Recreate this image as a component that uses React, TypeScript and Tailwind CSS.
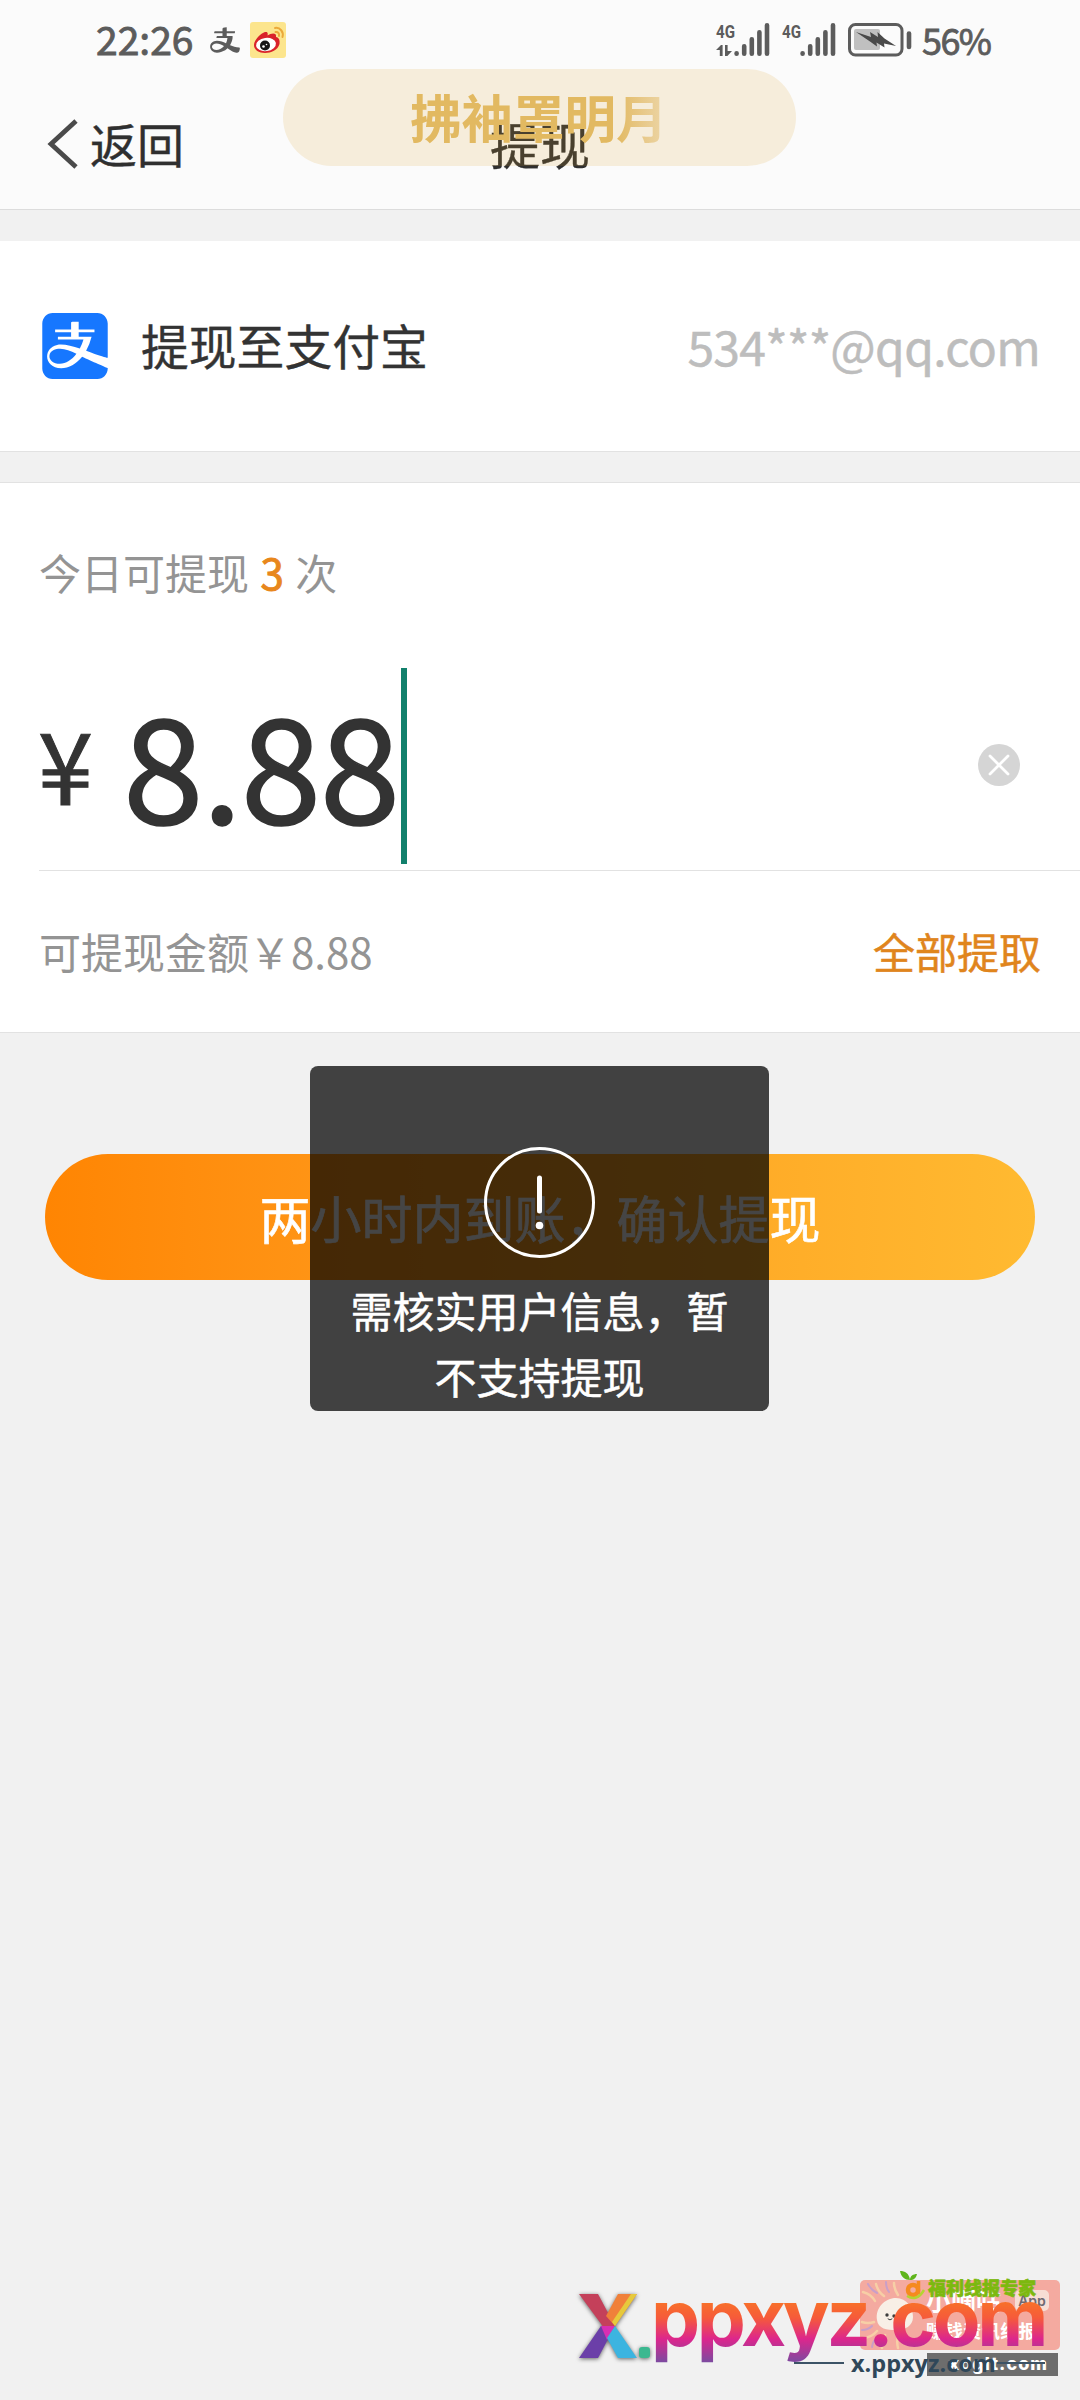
import { AiOutlineAlipay } from 'react-icons/ai';
import { SiAlipay } from 'react-icons/si';

function Signal({ data }: { data?: boolean }) {
  return (
    <svg width="54" height="34" viewBox="0 0 54 34" className="overflow-visible text-[#5c5c5c]">
      <text
        x="0"
        y="15"
        fontSize="19"
        fontWeight="700"
        fill="currentColor"
        textLength="19"
        lengthAdjust="spacingAndGlyphs"
        fontFamily="Roboto, sans-serif"
      >
        4G
      </text>
      {data && (
        <path d="M0 27l5-5h1.6v11H3.8v-6zM9 22h2.6v6H16l-4.6 5H9z" fill="currentColor" />
      )}
      <g stroke="currentColor" strokeWidth="4.6" strokeLinecap="round">
        <path d="M20.6 30.2v.6M28.2 23.2v7.6M35.8 16.2v14.6M43.4 9.2v21.6M51 2.2v28.6" />
      </g>
    </svg>
  );
}

function Battery() {
  return (
    <svg width="64" height="34" viewBox="0 0 64 34">
      <rect x="1.5" y="1.5" width="52.5" height="30.5" rx="6" fill="none" stroke="#5c5c5c" strokeWidth="3" />
      <rect x="6" y="6" width="26" height="21" rx="2" fill="#c0c0c0" />
      <path d="M8 9l15 5-1-5 8 5-.5-5 7 6.5L48 23l-12-2.5.5 4-8-5 .5 4-7-5z" fill="#4a4a4a" />
      <path d="M61 10.5v13.5" stroke="#5c5c5c" strokeWidth="4.6" strokeLinecap="round" />
    </svg>
  );
}

function WeiboIcon() {
  return (
    <svg width="36" height="36" viewBox="0 0 36 36">
      <rect width="36" height="36" rx="3" fill="#fce58d" />
      <path
        d="M4 23c0-5 7-12 11-13 3-.6 3 2 2.5 3.500C21 11 27 10 26 15c3 .6 4 3 3.500 7C28 28 21 31 15 31 9 31 4 28 4 23z"
        fill="#d9222a"
      />
      <ellipse cx="16" cy="22.5" rx="10" ry="6.6" fill="#fff" transform="rotate(-8 16 22.5)" />
      <circle cx="15" cy="23.5" r="5" fill="#161616" />
      <circle cx="13.5" cy="24.5" r="1.3" fill="#fff" />
      <circle cx="16.500" cy="22.500" r=".8" fill="#fff" />
      <path d="M25 6c5-1 9 4 7.500 9M25.500 10c2.500-.5 4 1.500 3.500 4" fill="none" stroke="#eba93a" strokeWidth="2" strokeLinecap="round" />
    </svg>
  );
}

function StatusBar() {
  return (
    <div className="flex h-[80px] items-center pl-[96px] pr-[91px] text-[#5c5c5c]">
      <span className="mb-[4px] w-[112px] text-[39px] leading-none [-webkit-text-stroke:0.9px_#5c5c5c]">22:26</span>
      <AiOutlineAlipay className="size-[34px]" />
      <div className="ml-2">
        <WeiboIcon />
      </div>
      <div className="ml-auto flex items-center">
        <Signal data />
        <div className="ml-[12px]">
          <Signal />
        </div>
        <div className="ml-[12px]">
          <Battery />
        </div>
        <span className="mb-[2px] ml-[10px] w-[67px] text-[36px] leading-none tracking-[-1.6px] [-webkit-text-stroke:0.8px_#5c5c5c]">
          56%
        </span>
      </div>
    </div>
  );
}

function Header() {
  return (
    <header className="h-[210px] border-b border-[#dcdcdc] bg-[#fbfbfb]">
      <StatusBar />
      <div className="grid h-[127px] grid-cols-3 items-center pl-[47px] pr-[47px] text-[#2f2f2f]">
        <div className="flex items-center">
          <svg width="31" height="50" viewBox="0 0 31 50" fill="none" stroke="#4a4a4a" strokeWidth="4.8">
            <path d="M29 2L4 25l25 23" />
          </svg>
          <span className="mb-[3px] ml-[12px] text-[47px] leading-none [-webkit-text-stroke:0.4px_#2f2f2f]">返回</span>
        </div>
        <h1 className="mb-[2px] text-center text-[50px] leading-none [-webkit-text-stroke:0.4px_#2f2f2f]">提现</h1>
      </div>
    </header>
  );
}

function AmountSection() {
  return (
    <section className="h-[551px] border-y border-[#e2e2e2] bg-white">
      <p className="pl-[39px] pt-[58px] text-[42px] leading-[62px] text-[#949494] [word-spacing:2px]">
        今日可提现 <span className="text-[#e8871b] [-webkit-text-stroke:1px_#e8871b]">3</span> 次
      </p>
      <div className="ml-[39px] mt-[65px] flex h-[203px] border-b border-[#e2e2e2] text-[#333]">
        <span className="ml-[-1px] mt-[46px] text-[99px] leading-[96px] [-webkit-text-stroke:1px_#333]">¥</span>
        <span className="ml-[30px] mt-[21px] text-[145px] leading-[145px] tracking-[-1.5px] [-webkit-text-stroke:1.6px_#333]">
          8.88
        </span>
        <div className="ml-[2px] h-[196px] w-[6px] bg-[#12806c]" />
        <div className="ml-auto mr-[60px] mt-[76px] flex size-[42px] items-center justify-center rounded-full bg-[#d5d5d5]">
          <svg width="22" height="22" viewBox="0 0 22 22" stroke="#fff" strokeWidth="2.8" strokeLinecap="round">
            <path d="M2 2l18 18M20 2L2 20" />
          </svg>
        </div>
      </div>
      <div className="flex items-center justify-between pl-[39px] pr-[39px] pt-[48px] text-[42px] leading-[64px]">
        <span className="text-[#949494]">可提现金额￥8.88</span>
        <button className="text-[#e0851d] [-webkit-text-stroke:0.5px_#e0851d]">全部提取</button>
      </div>
    </section>
  );
}

function Toast() {
  return (
    <div className="absolute left-[310px] top-[1066px] flex h-[345px] w-[459px] flex-col items-center rounded-[8px] bg-black/73 pt-[81px] text-white">
      <svg width="111" height="111" viewBox="0 0 111 111" fill="none" stroke="#fff">
        <circle cx="55.5" cy="55.5" r="54" strokeWidth="3" />
        <path d="M55.5 31v33" strokeWidth="5" strokeLinecap="round" />
        <circle cx="55.5" cy="78.5" r="3.8" fill="#fff" stroke="none" />
      </svg>
      <p className="mt-[19px] whitespace-nowrap text-center text-[42px] leading-[66px] [-webkit-text-stroke:0.5px_#fff]">
        需核实用户信息，暂
        <br />
        不支持提现
      </p>
    </div>
  );
}

function Watermark() {
  return (
    <div className="absolute left-[570px] top-[2260px] h-[130px] w-[500px] font-['Inter','Noto_Sans_CJK_SC',sans-serif]">
      {/* sponsor banner */}
      <div className="absolute left-[290px] top-[20px] h-[70px] w-[200px] overflow-hidden rounded-[5px] bg-[#f4aaa0]">
        <svg width="60" height="70" viewBox="0 0 60 70" fill="none" strokeLinecap="round">
          <g stroke="#f7cfa6" strokeWidth="2.5">
            <path d="M3 12q8 2 12 9M16 4q2 8 8 12M4 58q8-1 13-7M22 68q-1-8 3-13M38 68q-2-8 1-13M2 42q6 2 12 0M34 3q0 6 4 12" />
          </g>
          <g stroke="#c99fc8" strokeWidth="2">
            <path d="M8 4q3 6 9 9M2 50q6 0 10-4M12 67q1-7 6-10M26 2q0 6 3 10" />
          </g>
          <path d="M17 40c-2-12 8-22 19-22s17 10 17 19-8 13-17 13-18-1-19-10z" fill="#f8efe6" />
          <g fill="#3d3d3d">
            <circle cx="27" cy="35" r="1.7" />
            <circle cx="34" cy="36" r="1.7" />
          </g>
          <path d="M28 39q2 2 4 0" stroke="#3d3d3d" strokeWidth="1" />
        </svg>
        <span className="absolute left-[66px] top-[9px] text-[25px] font-bold leading-[25px] text-white">小嘀咕</span>
        <span className="absolute left-[155px] top-[10px] flex h-[21px] w-[34px] items-center justify-center rounded-[5px] bg-[#f7ddd4] text-[14px] font-semibold text-[#6f6a72]">
          App
        </span>
        <span className="absolute left-[66px] top-[42px] whitespace-nowrap text-[18.5px] font-bold leading-[19px] text-white">
          赚钱资讯线报
        </span>
      </div>
      <div className="absolute left-[357px] top-[93px] h-[23px] w-[131px] bg-[#6d6d6d] pr-[10px] text-right text-[18px] font-extrabold leading-[22px] tracking-[1px] text-white">
        xdglt.com
      </div>

      <svg width="30" height="32" viewBox="0 0 30 32" className="absolute left-[329px] top-[10px]" fill="none">
        <path d="M1 1c5 0 9 2 10 9C6 10 2 7 1 1zM11 10c0-4 3-6 7-6-1 4-3 6-7 6z" fill="#5fb51c" />
        <circle cx="14" cy="20" r="5" stroke="#f58a1f" strokeWidth="4.5" />
        <path d="M19.5 11v13" stroke="#f58a1f" strokeWidth="3.5" />
        <path d="M8 26q10 6 17-6" stroke="#b5d433" strokeWidth="2.5" />
      </svg>
      <span className="absolute left-[358px] top-[20px] whitespace-nowrap text-[18px] font-black leading-[18px] text-[#7cb90f] [-webkit-text-stroke:0.6px_#7cb90f]">
        福利线报专家
      </span>

      {/* large site name */}
      <svg width="76" height="76" viewBox="0 0 76 76" className="absolute left-[5px] top-[28px] drop-shadow-[0_1px_2px_rgba(0,0,0,0.6)]">
        <path d="M4 6h19l17 32-8 6z" fill="#c4405a" />
        <path d="M43 6h19L40 38l-9-10z" fill="#f0803a" />
        <path d="M62 6L40 38l-3-4L56 6z" fill="#e6c93c" />
        <path d="M40 38L23 70H4l22-32z" fill="#6b3fa8" />
        <path d="M26 38h14l-8 14z" fill="#d82fb2" />
        <path d="M40 38l22 32H43L32 50z" fill="#3cb4e0" />
        <rect x="64" y="59" width="11" height="11" rx="3" fill="#3cb890" />
      </svg>
      <span className="absolute left-[81px] top-[10px] bg-[linear-gradient(180deg,#f8702a_34%,#f65a3a_50%,#dc268d_72%,#7c4aa0_96%)] bg-clip-text text-[78px] font-bold leading-[96px] tracking-[-3.4px] text-transparent">
        ppxyz.com
      </span>
      <div className="absolute left-[224px] top-[88px] flex items-center font-['Open_Sans',sans-serif]">
        <div className="h-[2px] w-[50px] bg-[#3c5366]" />
        <span className="ml-[7px] w-[146px] text-[23.5px] font-bold leading-[30px] text-[#2f4759]">x.ppxyz.com</span>
        <div className="h-[2px] w-[48px] bg-[#3c5366]" />
      </div>
    </div>
  );
}

export default function App() {
  return (
    <div className="relative h-[2400px] w-[1080px] overflow-hidden bg-[#f1f1f1] font-['Noto_Sans_CJK_SC',sans-serif]">
      <Header />
      <main>
        <section className="mt-[31px] flex h-[211px] items-center justify-between border-b border-[#e2e2e2] bg-white pl-[42px] pr-[40px]">
          <div className="flex items-center">
            <SiAlipay className="size-[66px] text-[#1677ff]" />
            <span className="mb-[2px] ml-[33px] text-[47.8px] leading-none text-[#333] [-webkit-text-stroke:0.4px_#333]">
              提现至支付宝
            </span>
          </div>
          <span className="mb-[2px] text-[48px] leading-none tracking-[-0.7px] text-[#bdbdbd] [-webkit-text-stroke:0.5px_#bdbdbd]">
            534***@qq.com
          </span>
        </section>
        <div className="h-[30px]" />
        <AmountSection />
        <button className="ml-[45px] mt-[121px] flex h-[126px] w-[990px] items-center justify-center rounded-full bg-linear-to-r from-[#ff8502] to-[#ffba31] text-[51px] text-white [-webkit-text-stroke:0.6px_#fff]">
          两小时内到账，确认提现
        </button>
      </main>

      <div className="absolute left-[283px] top-[69px] h-[97px] w-[513px] rounded-full bg-[#dfa32b]/15 pl-[127px] text-[51.5px] font-bold leading-[94px] text-[#e2b961]">
        拂袖罩明
        <span className="bg-linear-to-r from-[#e2b961] to-[#edd7aa] bg-clip-text text-transparent">月</span>
      </div>
      <Toast />
      <Watermark />
    </div>
  );
}
